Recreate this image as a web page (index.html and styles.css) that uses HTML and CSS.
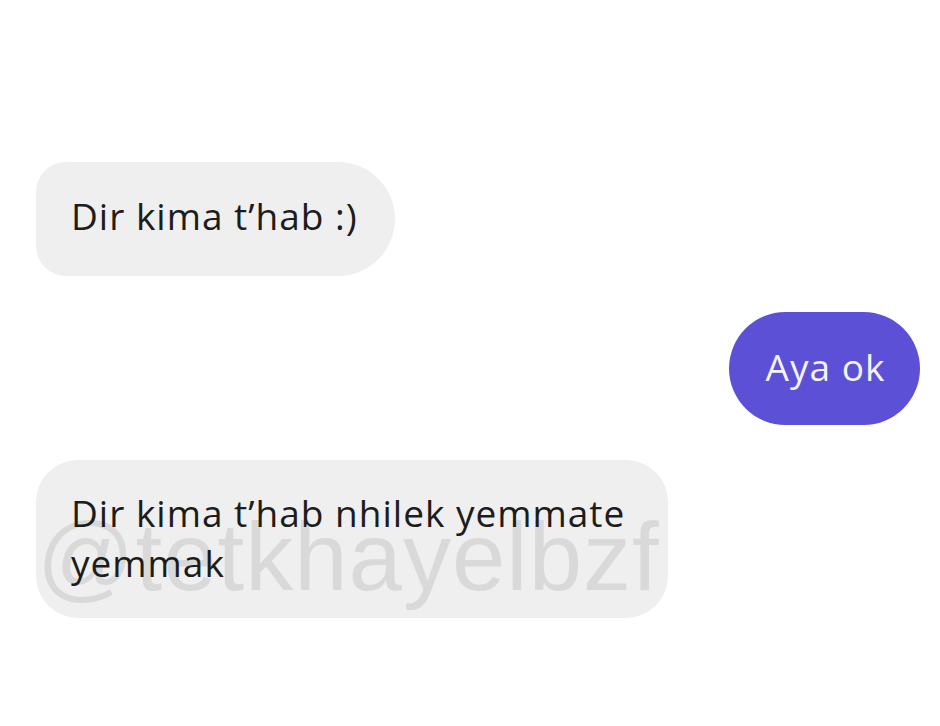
FILE: index.html
```html
<!DOCTYPE html>
<html>
<head>
<meta charset="utf-8">
<link rel="stylesheet" href="styles.css">
</head>
<body>
<div class="chat">
  <div class="bubble in first">Dir kima t’hab :)</div>
  <div class="bubble out">Aya ok</div>
  <div class="bubble in third">
    <span class="watermark">@tetkhayelbzf</span>
    <span class="msg">Dir kima t’hab nhilek yemmate<br>yemmak</span>
  </div>
</div>
</body>
</html>
```
FILE: styles.css
```css
html, body {
  margin: 0;
  padding: 0;
  background: #ffffff;
}
.chat {
  width: 940px;
  height: 726px;
  box-sizing: border-box;
  padding: 162px 20px 0 36px;
  display: flex;
  flex-direction: column;
  font-family: "Open Sans", "Liberation Sans", Arial, sans-serif;
}
.bubble {
  box-sizing: border-box;
  font-size: 37px;
  letter-spacing: 1px;
  color: #1c1c1c;
}
.in {
  background: #efefef;
  align-self: flex-start;
}
.first {
  width: 359px;
  height: 114px;
  border-radius: 30px 57px 57px 30px;
  padding: 31px 0 0 35px;
  line-height: 46px;
}
.out {
  align-self: flex-end;
  margin-top: 36px;
  width: 191px;
  height: 113px;
  border-radius: 57px;
  background: #5b50d6;
  color: #f4f3ff;
  display: flex;
  align-items: center;
  justify-content: center;
  padding: 0 0 4px 2px;
}
.third {
  position: relative;
  margin-top: 35px;
  width: 632px;
  height: 158px;
  border-radius: 42px;
  padding: 28px 0 0 35px;
  line-height: 50px;
  overflow: hidden;
}
.msg {
  position: relative;
  z-index: 1;
}
.watermark {
  position: absolute;
  left: 1px;
  top: 42px;
  font-family: "Liberation Sans", Arial, sans-serif;
  font-size: 96px;
  letter-spacing: 1px;
  line-height: 110px;
  color: rgba(120, 120, 120, 0.19);
  white-space: nowrap;
}
```
